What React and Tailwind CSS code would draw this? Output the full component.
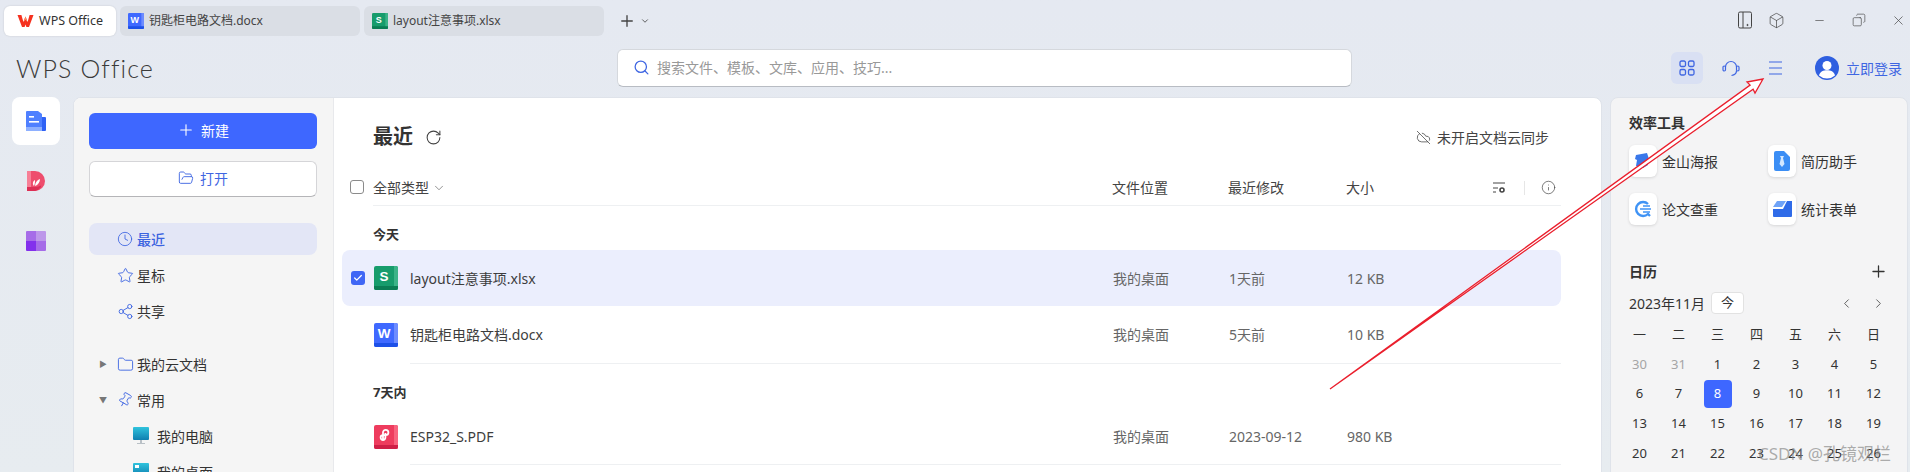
import { Box, Check, ChevronDown, ChevronLeft, ChevronRight, Clock, CloudOff, Copy, Folder, FolderOpen, Info, Minus, Pin, Plus, RotateCw, Search, Share2, Star, X } from "lucide-react";

const font = "font-['Noto_Sans','Noto_Sans_CJK_SC',sans-serif]";

function FileIcon({ kind, size = 24 }) {
    const colors = {
        w: ["#3f69ff", "#6d8cff", "#1d50e8"],
        s: ["#179c6c", "#3cb388", "#0b7d54"],
        p: ["#ee3c5e", "#f8647f", "#cf1f47"],
    }[kind];
    return (
        <svg width={size} height={size} viewBox="0 0 24 24" className="shrink-0">
            <rect width="24" height="24" rx="2" fill={colors[0]} />
            <path d="M20 0h2a2 2 0 0 1 2 2v20a2 2 0 0 1-2 2h-2z" fill={colors[1]} />
            <path d="M0 20h24v2a2 2 0 0 1-2 2H2a2 2 0 0 1-2-2z" fill={colors[2]} />
            {kind === "p" ? (
                <path d="M9 15V7.5a2.7 2.7 0 1 1 2.7 2.7H9a2.4 2.4 0 1 0 2.4 2.4V8" fill="none" stroke="#fff" strokeWidth="1.8" />
            ) : (
                <text x="10" y="14.5" textAnchor="middle" fontSize="13.5" fontWeight="700" fill="#fff" fontFamily="Liberation Sans, sans-serif">
                    {kind === "w" ? "W" : "S"}
                </text>
            )}
        </svg>
    );
}

function WpsMark() {
    return (
        <svg width="17" height="14" viewBox="0 0 17 14" className="shrink-0">
            <path d="M0.5 1 L5 13 H7.6 L8.5 10.4 L9.4 13 H12 L16.5 1 H12.6 L10.6 8 L8.5 2.5 L6.4 8 L4.4 1z" fill="#f5311f" />
            <path d="M6.4 8 L8.5 2.5 L10.6 8 L8.5 5.8z" fill="#ff8a60" />
        </svg>
    );
}

function Tab({ icon, label, active }) {
    return (
        <div className={active
            ? "flex h-[30px] w-[112px] items-center rounded-md bg-white pl-[13px] text-[12.5px] text-[#333] shadow-[0_0_2px_rgba(0,0,0,0.15)]"
            : "flex h-[30px] w-[240px] items-center rounded-md bg-[#dadee5] pl-2 text-[12px] text-[#444]"}>
            {icon}
            <span className="ml-[5px]">{label}</span>
        </div>
    );
}

function NavRow({ icon, label, active, arrow }) {
    return (
        <div className={active
            ? "flex h-8 items-center rounded-lg bg-[#e3e6f6] text-[14px] font-medium text-[#3b63e0]"
            : "flex h-9 items-center text-[14px] text-[#333]"}>
            <span className="flex w-[24px] justify-center pl-[4px] text-[8px] text-[#777]">
                {arrow}
            </span>
            <span className="flex w-[24px] justify-center text-[#3f66e2]">{icon}</span>
            <span>{label}</span>
        </div>
    );
}

function SubRow({ label, cut }) {
    return (
        <div className="flex h-9 items-center pl-[44px] text-[14px] text-[#333]">
            <svg width="16" height="18" viewBox="0 0 16 18" className="shrink-0">
                <defs>
                    <linearGradient id="pc" x1="0" y1="0" x2="0" y2="1">
                        <stop offset="0" stopColor="#2fc3dd" />
                        <stop offset="1" stopColor="#0f7fb0" />
                    </linearGradient>
                </defs>
                <rect width="16" height="13" rx="1" fill="url(#pc)" />
                {cut ? <rect x="2" y="2" width="4" height="3" fill="#fff" /> : null}
                <rect x="7" y="13" width="2" height="3" fill="#b9c0c6" />
                <rect x="4" y="16" width="8" height="1" fill="#b9c0c6" />
            </svg>
            <span className="ml-2">{label}</span>
        </div>
    );
}

function FileRow({ icon, name, place, time, size, selected, last }) {
    return (
        <div className={selected
            ? "ml-2 mr-10 flex h-14 items-center rounded-lg bg-[#ebeefd] pl-[9px]"
            : "ml-2 mr-10 flex items-center pl-[9px] " + (last ? "h-[57px]" : "h-[58px]")}>
            <span className="w-[23px] shrink-0">
                {selected ? (
                    <span className="flex h-[14px] w-[14px] items-center justify-center rounded-[3px] bg-[#3f66f5] text-white">
                        <Check size={10} strokeWidth={3} />
                    </span>
                ) : null}
            </span>
            <FileIcon kind={icon} />
            <div className={"ml-3 flex h-full flex-1 items-center text-[14px] " + (selected ? "" : "border-b border-[#eef0f2]")}>
                <span className="w-[703px] text-[#3d3d3d]">{name}</span>
                <span className="w-[116px] text-[#666]">{place}</span>
                <span className="w-[118px] text-[#666]">{time}</span>
                <span className="text-[#666]">{size}</span>
            </div>
        </div>
    );
}

function Tool({ icon, label }) {
    return (
        <div className="flex w-[139px] items-center text-[14px] text-[#333]">
            <span className="flex h-8 w-7 items-center justify-center rounded-md bg-white shadow-[0_1px_3px_rgba(0,0,0,0.12)]">{icon}</span>
            <span className="ml-[5px]">{label}</span>
        </div>
    );
}

const days = [30, 31, 1, 2, 3, 4, 5, 6, 7, 8, 9, 10, 11, 12, 13, 14, 15, 16, 17, 18, 19, 20, 21, 22, 23, 24, 25, 26];

export default function App() {
    return (
        <div className={"relative flex h-[472px] w-full flex-col overflow-hidden bg-gradient-to-b from-[#e5e9f1] to-[#e7ecf0] " + font}>
            {/* tabs */}
            <div className="flex h-[41px] shrink-0 items-start gap-1 pl-1 pt-[6px]">
                <Tab active icon={<WpsMark />} label="WPS Office" />
                <Tab icon={<FileIcon kind="w" size={16} />} label="钥匙柜电路文档.docx" />
                <Tab icon={<FileIcon kind="s" size={16} />} label="layout注意事项.xlsx" />
                <div className="ml-[10px] flex h-[30px] items-center text-[#444]">
                    <Plus size={18} strokeWidth={1.8} />
                    <ChevronDown size={10} className="ml-[4px]" />
                </div>
                <div className="ml-auto flex h-[28px] items-center pr-[4px] text-[#444]">
                    <svg width="16" height="18" viewBox="0 0 16 18" fill="none" stroke="#444" strokeWidth="1">
                        <rect x="1.5" y="1" width="13" height="16" rx="1.5" />
                        <path d="M6 1v16" />
                        <circle cx="10.5" cy="14" r="0.6" fill="#444" />
                    </svg>
                    <Box size={17} strokeWidth={1} className="ml-[15px]" />
                    <Minus size={13} strokeWidth={1.2} className="ml-[28px]" />
                    <Copy size={14} strokeWidth={1.1} className="ml-[26px] -scale-x-100" />
                    <X size={15} strokeWidth={1.1} className="ml-[25px]" />
                </div>
            </div>

            {/* top bar */}
            <div className="flex h-[56px] shrink-0 items-start">
                <div className="w-[617px] pl-4 pt-[9px] font-['Lato',sans-serif] text-[25px] leading-[36px] font-light tracking-[1.1px] text-[#3b3b3b]">
                    WPS Office
                </div>
                <div className="mt-2 flex h-[38px] w-[735px] items-center rounded-md border border-[#d5d8dd] border-b-[#b8bcc3] bg-white pb-[2px] pl-[15px] text-[14px] text-[#999]">
                    <Search size={17} strokeWidth={1.8} className="text-[#3f66e2]" />
                    <span className="ml-[7px]">搜索文件、模板、文库、应用、技巧...</span>
                </div>
                <div className="ml-[319px] mt-[11px] flex items-center text-[#3f66e2]">
                    <span className="flex h-8 w-8 items-center justify-center rounded-md bg-[#d9e0f3]">
                        <svg width="16" height="16" viewBox="0 0 16 16" fill="none" stroke="currentColor" strokeWidth="1.3">
                            <rect x="1" y="1" width="5.5" height="5.5" rx="1.5" />
                            <rect x="9.5" y="1" width="5.5" height="5.5" rx="1.5" />
                            <rect x="1" y="9.5" width="5.5" height="5.5" rx="1.5" />
                            <rect x="9.5" y="9.5" width="5.5" height="5.5" rx="1.5" />
                        </svg>
                    </span>
                    <svg width="18" height="17" viewBox="0 0 18 17" fill="none" stroke="currentColor" strokeWidth="1.2" className="ml-[19px]">
                        <path d="M3.5 7a5.5 5.5 0 0 1 11 0" />
                        <path d="M14.5 10.5c0 2.5-2 4.5-5 5" />
                        <rect x="1" y="6" width="2.5" height="5" rx="1.2" />
                        <rect x="14.5" y="6" width="2.5" height="5" rx="1.2" />
                    </svg>
                    <svg width="13" height="14" viewBox="0 0 13 14" stroke="currentColor" strokeWidth="1.2" className="ml-[29px]">
                        <path d="M0 1h13M0 7h13M0 13h13" />
                    </svg>
                    <svg width="24" height="24" viewBox="0 0 24 24" className="ml-[33px]">
                        <circle cx="12" cy="12" r="12" fill="#2f5fe0" />
                        <circle cx="12" cy="9.5" r="4.5" fill="#fff" />
                        <path d="M4 19.5c1-4 4.5-5.2 8-5.2s7 1.2 8 5.2a12 12 0 0 1-16 0z" fill="#fff" />
                    </svg>
                    <span className="ml-[7px] text-[14px]">立即登录</span>
                </div>
            </div>

            {/* body */}
            <div className="flex min-h-0 flex-1 items-start">
                <div className="flex w-[73px] shrink-0 flex-col gap-3 pl-3">
                    <span className="flex h-12 w-12 items-center justify-center rounded-lg bg-white">
                        <svg width="20" height="20" viewBox="0 0 20 20">
                            <path d="M1 0h11l4 3v17H1a1 1 0 0 1-1-1V1a1 1 0 0 1 1-1z" fill="#4f80ff" />
                            <path d="M16 6h3a1 1 0 0 1 1 1v12a1 1 0 0 1-1 1h-3z" fill="#2f62f5" />
                            <rect y="16" width="16" height="4" fill="#8eb0ff" />
                            <rect x="3" y="5" width="5" height="1.6" fill="#fff" />
                            <rect x="3" y="10" width="10" height="1.6" fill="#fff" />
                        </svg>
                    </span>
                    <span className="flex h-12 w-12 items-center justify-center">
                        <svg width="18" height="20" viewBox="0 0 18 20">
                            <path d="M0 0h8a10 10 0 0 1 0 20H0z" fill="#ee4d6d" />
                            <path d="M0 0h4v20H0z" fill="#f77f96" />
                            <path d="M0 16h9a10 10 0 0 0 5-1.5V16a10 10 0 0 1-6 4H0z" fill="#dd2f55" />
                            <path d="M7 15c-2-2-1-5 1-6 0 2 0 4-1 6zM8 15c0-3 2-6 5-7 0 3-2 6-5 7z" fill="#fff" />
                        </svg>
                    </span>
                    <span className="flex h-12 w-12 items-center justify-center">
                        <svg width="20" height="20" viewBox="0 0 20 20">
                            <path d="M1 0h9v10H0V1a1 1 0 0 1 1-1z" fill="#a66ce8" />
                            <path d="M10 0h9a1 1 0 0 1 1 1v9H10z" fill="#bd97ea" />
                            <path d="M0 10h10v10H1a1 1 0 0 1-1-1z" fill="#8330ec" />
                            <path d="M10 10h10v9a1 1 0 0 1-1 1h-9z" fill="#a66ce8" />
                        </svg>
                    </span>
                </div>

                {/* main panel */}
                <div className="flex h-[500px] w-[1529px] shrink-0 overflow-hidden rounded-lg border border-[#dfe3ea] bg-white">
                    <div className="w-[260px] shrink-0 border-r border-[#e8e9ec] bg-[#f5f5f5] pl-[15px] pr-[16px] pt-[15px]">
                        <div className="flex h-9 items-center justify-center rounded-md bg-[#3e67ff] pb-[2px] text-[14px] text-white">
                            <Plus size={18} strokeWidth={1.5} />
                            <span className="ml-[6px]">新建</span>
                        </div>
                        <div className="mt-3 flex h-9 items-center justify-center rounded-md border border-[#d5d5d8] border-b-[#b5b5b8] bg-white pb-[2px] text-[14px] text-[#3f66e2]">
                            <FolderOpen size={16} strokeWidth={1.4} />
                            <span className="ml-[6px]">打开</span>
                        </div>
                        <div className="mt-[26px]">
                            <NavRow active icon={<Clock size={16} strokeWidth={1.3} />} label="最近" />
                            <div className="mt-[2px]">
                                <NavRow icon={<Star size={17} strokeWidth={1.3} />} label="星标" />
                                <NavRow icon={<Share2 size={17} strokeWidth={1.3} />} label="共享" />
                            </div>
                            <div className="mt-[17px]">
                                <NavRow arrow="▶" icon={<Folder size={17} strokeWidth={1.3} />} label="我的云文档" />
                                <NavRow arrow="▼" icon={<Pin size={16} strokeWidth={1.3} className="rotate-[30deg]" />} label="常用" />
                                <SubRow label="我的电脑" />
                                <SubRow cut label="我的桌面" />
                            </div>
                        </div>
                    </div>

                    <div className="min-w-0 flex-1">
                        <div className="flex h-[76px] items-center pl-[39px] pr-[52px] pt-[2px]">
                            <span className="text-[20px] font-bold text-[#333]">最近</span>
                            <RotateCw size={17} strokeWidth={1.5} className="ml-[12px] text-[#444]" />
                            <CloudOff size={15} strokeWidth={1.2} className="ml-auto text-[#444]" />
                            <span className="ml-[6px] text-[14px] text-[#444]">未开启文档云同步</span>
                        </div>
                        <div className="ml-[16px] mr-10 flex h-[32px] items-start pt-[6px] text-[14px] text-[#444]">
                            <span className="h-[14px] w-[14px] rounded-[3px] border border-[#8b8b8b]" />
                        </div>
                        <div className="-mt-[32px] ml-[39px] mr-10 flex h-[32px] items-center border-b border-[#eef0f2] pb-[4px] text-[14px] text-[#444]">
                            <span>全部类型</span>
                            <ChevronDown size={14} strokeWidth={1.2} className="ml-[3px] text-[#666]" />
                            <span className="ml-[666px] w-[116px]">文件位置</span>
                            <span className="w-[118px]">最近修改</span>
                            <span>大小</span>
                            <svg width="14" height="12" viewBox="0 0 14 12" fill="none" stroke="#444" strokeWidth="1" className="ml-[118px]">
                                <path d="M1 1h12M1 6h5M1 10h3" />
                                <circle cx="10" cy="8" r="2" strokeWidth="1.6" />
                            </svg>
                            <span className="ml-[18px] h-[14px] w-px bg-[#e6e6e6]" />
                            <Info size={15} strokeWidth={1.1} className="ml-[16px] text-[#444]" />
                        </div>
                        <div className="flex h-[44px] items-start pl-[39px] pt-[18px] text-[13px] leading-[20px] font-bold text-[#333]">今天</div>
                        <FileRow selected icon="s" name="layout注意事项.xlsx" place="我的桌面" time="1天前" size="12 KB" />
                        <FileRow icon="w" name="钥匙柜电路文档.docx" place="我的桌面" time="5天前" size="10 KB" />
                        <div className="flex h-[44px] items-start pl-[39px] pt-[18px] text-[13px] leading-[20px] font-bold text-[#333]">7天内</div>
                        <FileRow last icon="p" name="ESP32_S.PDF" place="我的桌面" time="2023-09-12" size="980 KB" />
                    </div>
                </div>

                {/* right panel */}
                <div className="ml-2 h-[500px] w-[298px] shrink-0 rounded-lg border border-[#dfe3ea] bg-[#f4f4f5] pl-[18px] pt-[15px]">
                    <div className="text-[14px] leading-[20px] font-bold text-[#333]">效率工具</div>
                    <div className="mt-[12px] flex">
                        <Tool label="金山海报" icon={
                            <svg width="18" height="18" viewBox="0 0 18 18"><path d="M2 3l11-2 2 6-2 1 1 5-5 3-7-2 1-6-2-1z" fill="#3a78ea" /></svg>
                        } />
                        <Tool label="简历助手" icon={
                            <svg width="16" height="20" viewBox="0 0 16 20"><path d="M2 0h8l6 6v12a2 2 0 0 1-2 2H2a2 2 0 0 1-2-2V2a2 2 0 0 1 2-2z" fill="#3b8ef5" /><path d="M6 5h4l-1 2 1.5 6L8 16l-2.5-3L7 7z" fill="#d3e8ff" /></svg>
                        } />
                    </div>
                    <div className="mt-4 flex">
                        <Tool label="论文查重" icon={
                            <svg width="18" height="18" viewBox="0 0 18 18" fill="none" stroke="#3f93f5" strokeWidth="2.4"><path d="M14 4a7 7 0 1 0 0 10l2 2" /><path d="M6 9h11M9 6h7M9 12h7" strokeWidth="1.4" /></svg>
                        } />
                        <Tool label="统计表单" icon={
                            <svg width="20" height="18" viewBox="0 0 20 18"><path d="M5 1h9l-4 6H1z" fill="#6fa3f7" /><path d="M15 1h5v15a1 1 0 0 1-1 1H2a1 1 0 0 1-1-1V9h10z" fill="#2f6be8" /></svg>
                        } />
                    </div>

                    <div className="mt-[36px] flex h-5 items-center justify-between pr-[19px]">
                        <span className="text-[14px] font-bold text-[#333]">日历</span>
                        <Plus size={19} strokeWidth={1.6} className="text-[#333]" />
                    </div>
                    <div className="mt-[11px] flex h-[22px] items-center pr-[21px] text-[14px] text-[#333]">
                        <span>2023年11月</span>
                        <span className="ml-[6px] flex h-[22px] w-[33px] items-center justify-center rounded border border-[#e2e2e2] bg-white text-[13px]">今</span>
                        <ChevronLeft size={15} strokeWidth={1.2} className="ml-auto" />
                        <ChevronRight size={15} strokeWidth={1.2} className="ml-[17px]" />
                    </div>
                    <div className="-ml-[9px] mt-[6px] grid w-[273px] grid-cols-7 grid-rows-[30px_29px_29px_31px_30px] text-[13px] text-[#333]">
                        {["一", "二", "三", "四", "五", "六", "日"].map((d) => (
                            <span key={d} className="flex items-center justify-center">{d}</span>
                        ))}
                        {days.map((d, i) => (
                            <span key={i} className={"flex items-center justify-center " + (i < 2 ? "text-[#a5a5a5]" : "")}>
                                {d === 8 ? (
                                    <span className="flex h-[28px] w-[28px] items-center justify-center rounded bg-[#3e67ff] text-white">8</span>
                                ) : d}
                            </span>
                        ))}
                    </div>
                </div>
            </div>

            {/* annotation arrow + watermark lie over the page */}
            <svg width="1910" height="472" className="pointer-events-none absolute left-0 top-0">
                <polygon points="1330,389 1750.1,85.1 1747,82 1763,79 1755,93 1753.1,89.1" fill="#fff" stroke="#ea1f2d" strokeWidth="1.3" />
            </svg>
            <span className="pointer-events-none absolute left-[1758px] top-[442px] text-[17px] leading-[24px] whitespace-nowrap text-[#8a8a8a]/70">CSDN @孔镜观栏</span>
        </div>
    );
}
